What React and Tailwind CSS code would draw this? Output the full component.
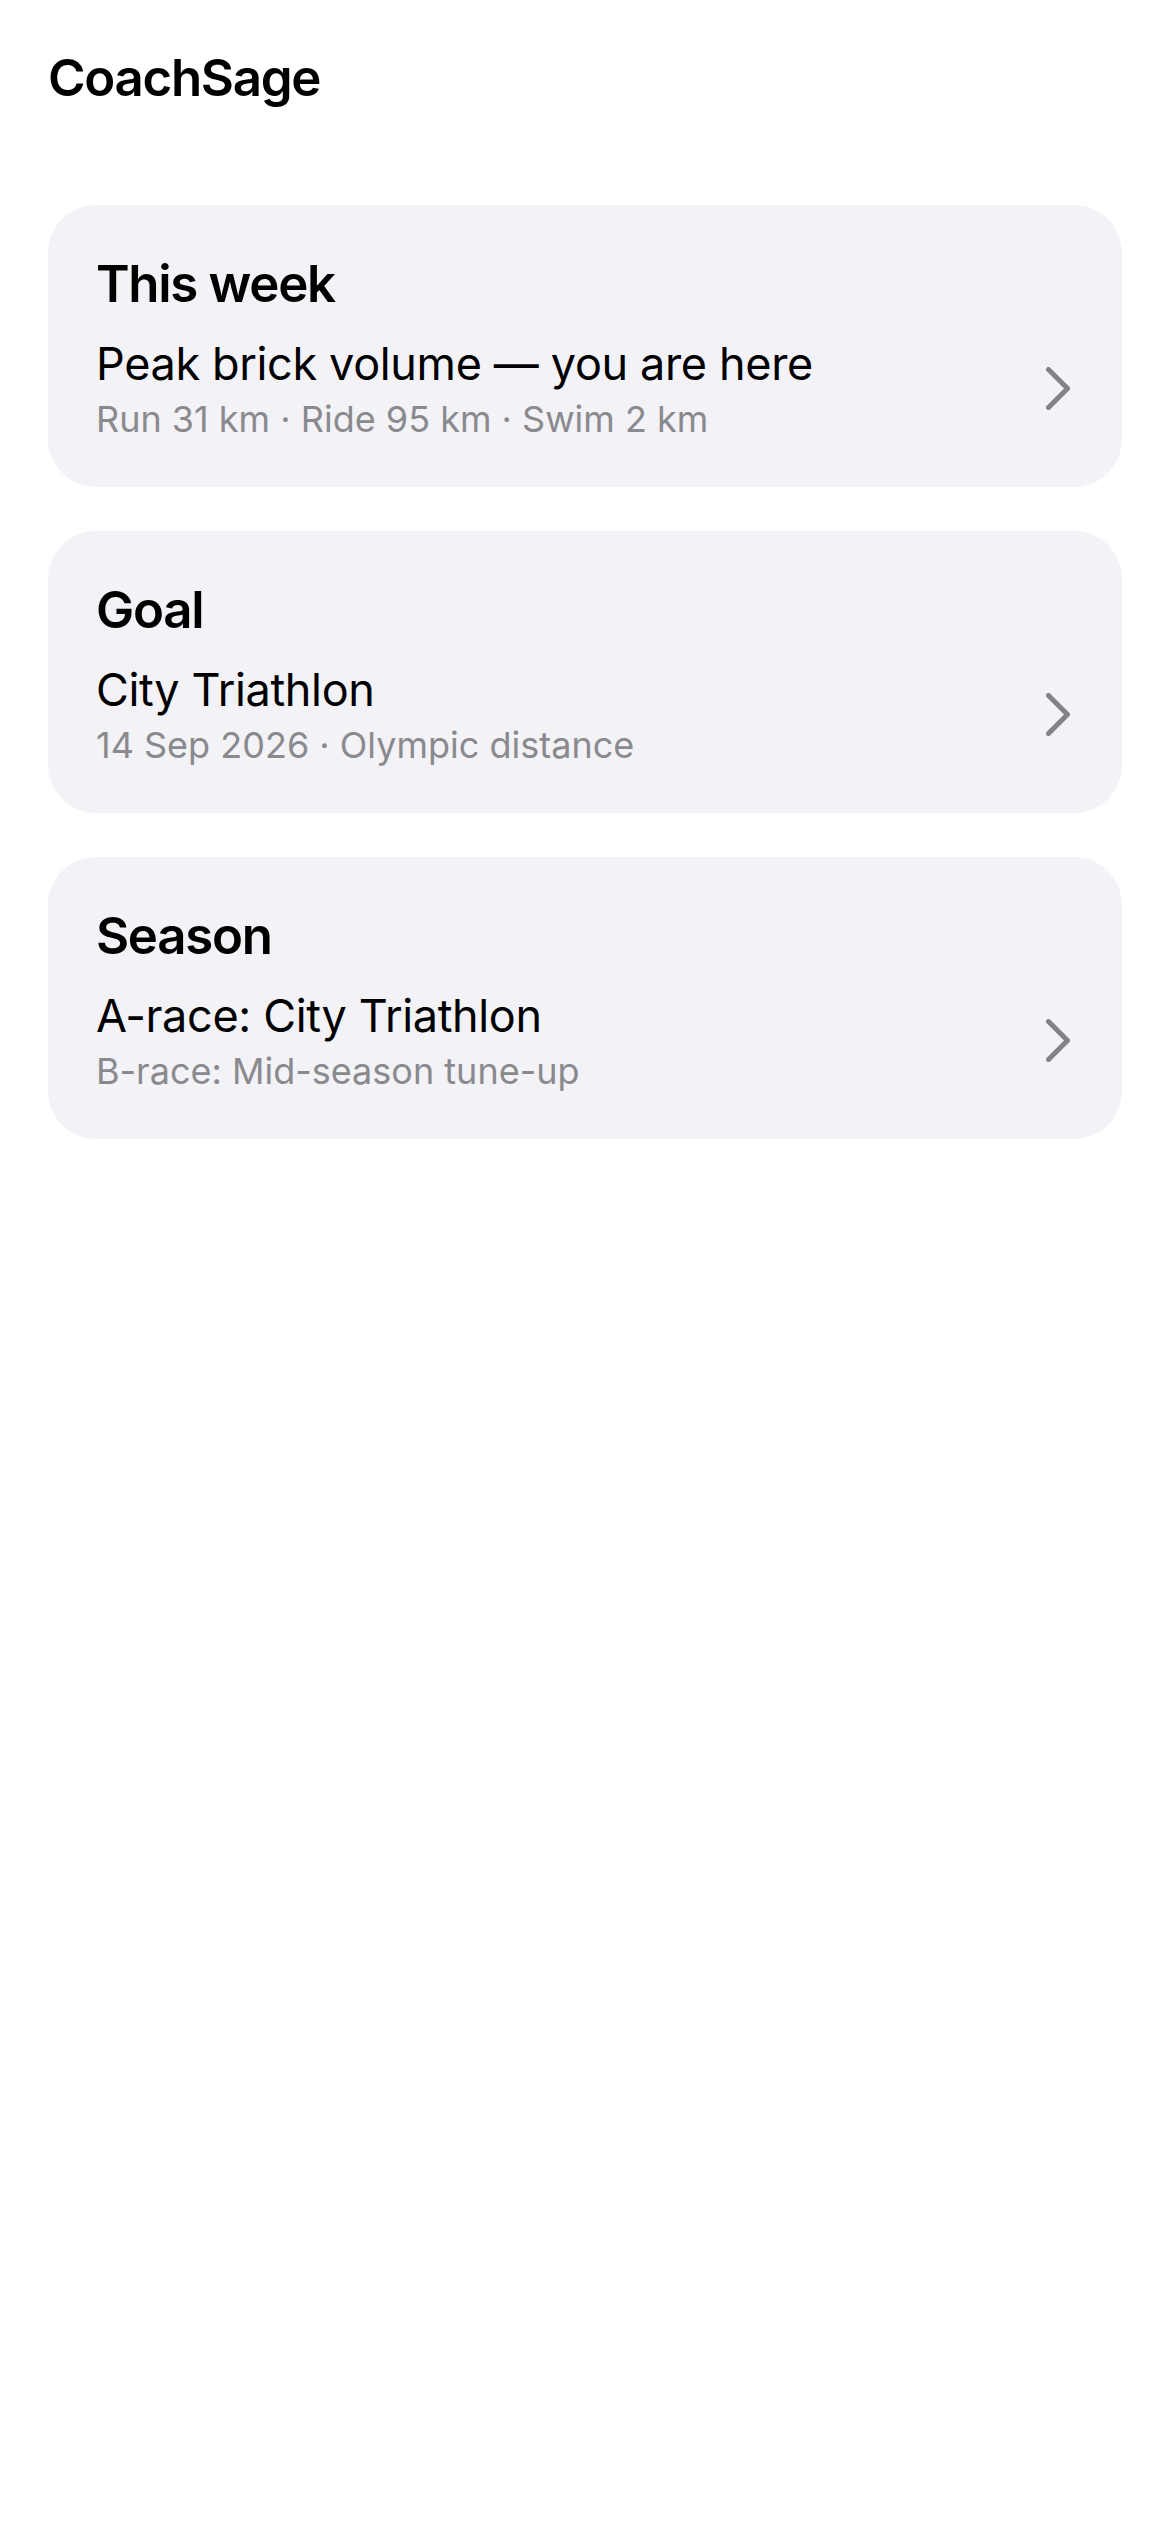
import React from "react";

function Chevron() {
  return (
    <svg width="24" height="43" viewBox="0 0 24 43" fill="none" className="shrink-0">
      <path d="M2.5 2.5 L21.5 21.5 L2.5 40.5" stroke="#828287" strokeWidth="5" strokeLinecap="round" strokeLinejoin="round" />
    </svg>
  );
}

function Card({ title, main, detail }) {
  return (
    <div className="bg-[#F2F2F7] rounded-[48px] pl-[48px] pr-[52px] pt-[47px] pb-[47px]">
      <div className="text-[51px] leading-[63px] font-semibold tracking-[-1.3px] text-black">{title}</div>
      <div className="mt-[22px] flex items-center justify-between">
        <div className="flex flex-col">
          <div className="text-[45px] leading-[54px] tracking-[-0.35px] text-black">{main}</div>
          <div className="mt-[7px] text-[36px] leading-[42px] text-[#8A8A8E]">{detail}</div>
        </div>
        <Chevron />
      </div>
    </div>
  );
}

export default function App() {
  return (
    <div className="min-h-screen bg-white font-['Inter','Noto_Sans',sans-serif] px-[48px]">
      <div className="pt-[47px] text-[51px] leading-[62px] font-semibold tracking-[-1.3px] text-black">CoachSage</div>
      <div className="mt-[96px] flex flex-col gap-[44px]">
        <Card title="This week" main="Peak brick volume — you are here" detail="Run 31 km · Ride 95 km · Swim 2 km" />
        <Card title="Goal" main="City Triathlon" detail="14 Sep 2026 · Olympic distance" />
        <Card title="Season" main="A-race: City Triathlon" detail="B-race: Mid-season tune-up" />
      </div>
    </div>
  );
}
